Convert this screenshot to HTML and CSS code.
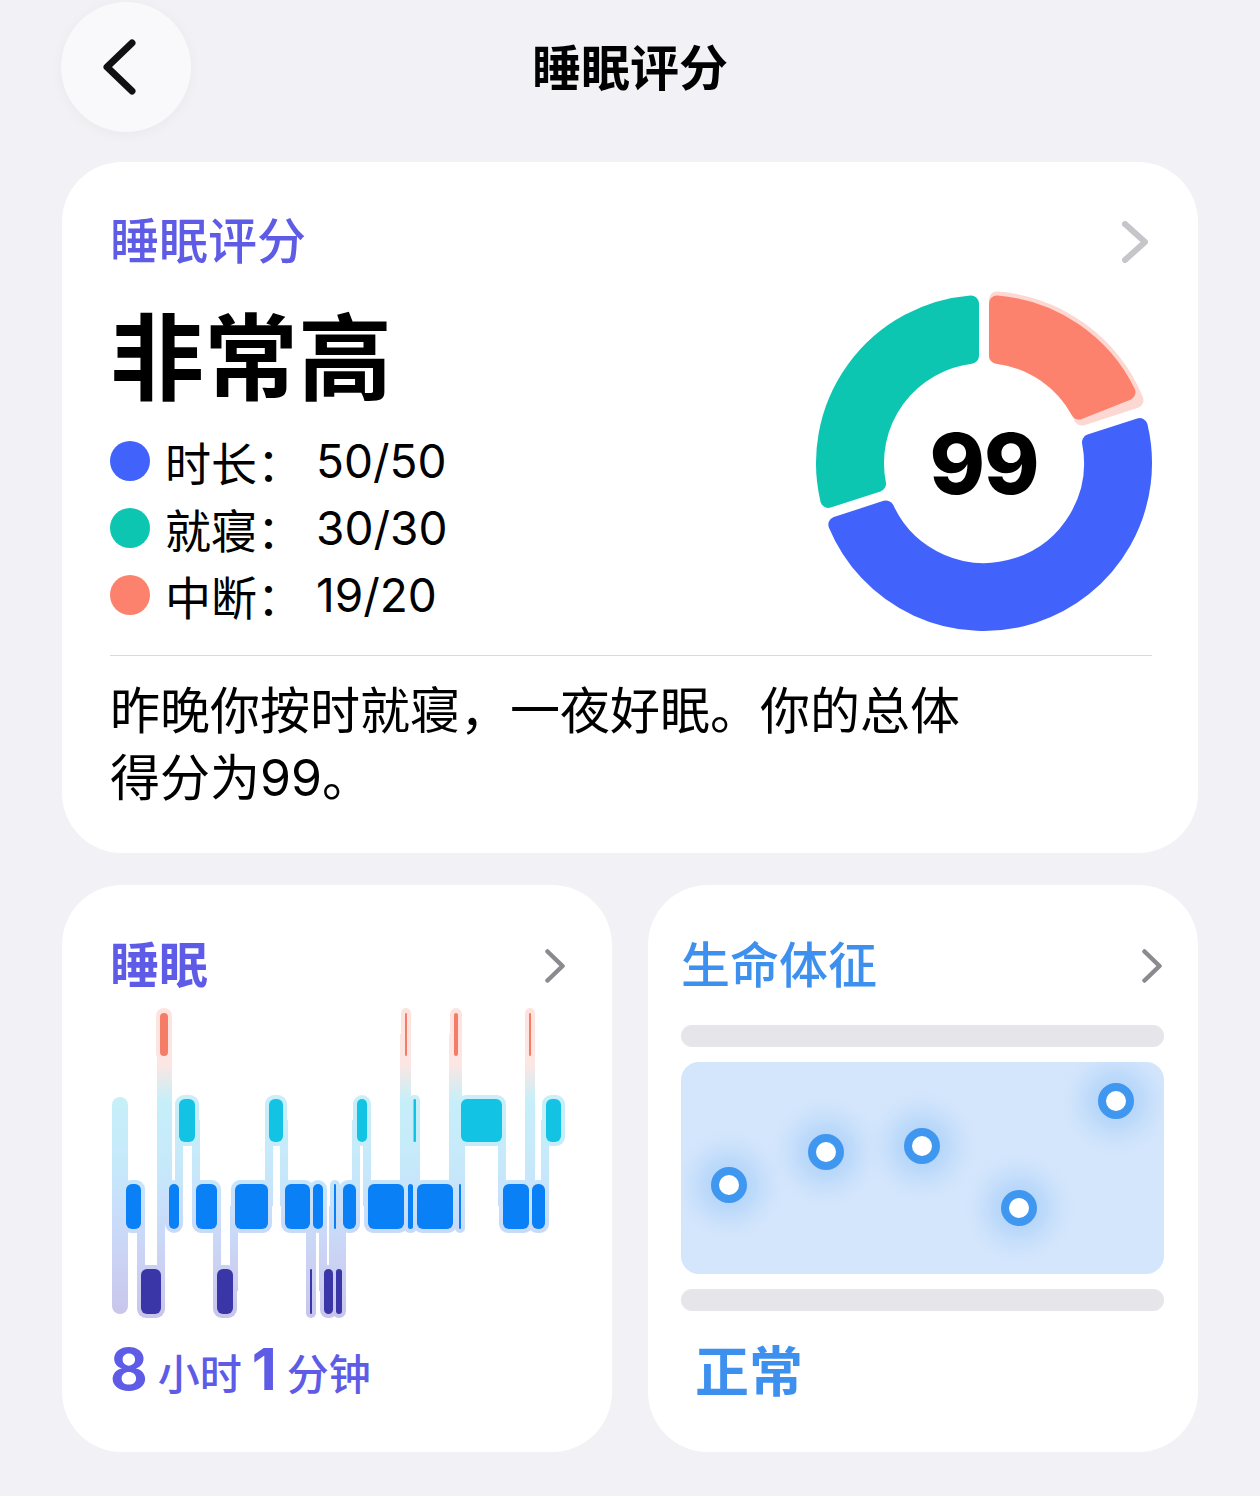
FILE: index.html
```html
<!DOCTYPE html>
<html lang="zh-CN">
<head>
  <meta charset="UTF-8">
  <meta name="viewport" content="width=device-width, initial-scale=1.0">
  <title>睡眠评分</title>
  <link rel="stylesheet" href="styles.css">
</head>
<body>
  <div class="page">
    <header class="topbar">
      <button class="back-btn" aria-label="返回">
        <svg width="40" height="60" viewBox="0 0 40 60"><path d="M30 6 L5 30 L30 54" fill="none" stroke="#111" stroke-width="7" stroke-linecap="round" stroke-linejoin="round"/></svg>
      </button>
      <h1 class="page-title">睡眠评分</h1>
      <div></div>
    </header>

    <section class="card score-card">
      <div class="card-head">
        <span class="card-title">睡眠评分</span>
        <svg class="chev-lg" width="26" height="42" viewBox="0 0 26 42"><path d="M3 3 L23 21 L3 39" fill="none" stroke="#c6c6ca" stroke-width="6" stroke-linecap="round" stroke-linejoin="round"/></svg>
      </div>

      <div class="score-row">
        <div class="score-left">
          <div class="level">非常高</div>
          <ul class="legend">
            <li class="legend-row"><span class="dot dot-blue"></span>时长：<span class="legend-val">50/50</span></li>
            <li class="legend-row"><span class="dot dot-teal"></span>就寝：<span class="legend-val">30/30</span></li>
            <li class="legend-row"><span class="dot dot-coral"></span>中断：<span class="legend-val">19/20</span></li>
          </ul>
        </div>

        <div class="donut">
          <svg width="360" height="360" viewBox="-10 -10 360 360">
            <g stroke-width="16" stroke-linejoin="round">
              <path d="M182.99 6.51 A164 164 0 0 1 321.47 107.14 L267.96 124.53 A108 108 0 0 0 182.97 62.78 Z" fill="#fdd7d1" stroke="#fdd7d1"/>
              <path d="M182.98 10.53 A160 160 0 0 1 313.5 99.23 L264.91 118.46 A108 108 0 0 0 182.97 62.78 Z" fill="#fd826d" stroke="#fd826d"/>
              <path d="M325.68 133.06 A160 160 0 0 1 22.34 231.62 L72.04 215.47 A108 108 0 0 0 275.98 149.21 Z" fill="#4263fb" stroke="#4263fb"/>
              <path d="M14.32 206.94 A160 160 0 0 1 157.02 10.53 L157.03 62.78 A108 108 0 0 0 64.02 190.79 Z" fill="#0dc6b2" stroke="#0dc6b2"/>
            </g>
          </svg>
          <span class="donut-score">99</span>
        </div>
      </div>

      <div class="divider"></div>
      <p class="summary">昨晚你按时就寝，一夜好眠。你的总体得分为99。</p>
    </section>

    <div class="cards-row">
      <section class="card mini-card">
        <div class="card-head">
          <span class="card-title card-title-bold">睡眠</span>
          <svg width="20" height="34" viewBox="0 0 20 34"><path d="M2.5 2.5 L17.5 17 L2.5 31.5" fill="none" stroke="#8a8a8f" stroke-width="4.5" stroke-linecap="round" stroke-linejoin="round"/></svg>
        </div>

        <svg class="sleep-chart" width="455" height="316" viewBox="110 1005 455 316">
          <defs>
            <linearGradient id="halo" gradientUnits="userSpaceOnUse" x1="0" y1="1009" x2="0" y2="1320">
              <stop offset="0" stop-color="#fde3de"/>
              <stop offset="0.18" stop-color="#fce6e3"/>
              <stop offset="0.3" stop-color="#c6eff9"/>
              <stop offset="0.5" stop-color="#c6e9fa"/>
              <stop offset="0.66" stop-color="#c8defb"/>
              <stop offset="0.8" stop-color="#cbd3f4"/>
              <stop offset="1" stop-color="#c8c5ea"/>
            </linearGradient>
          </defs>
          <g fill="url(#halo)">
            <rect x="112" y="1098" width="16" height="217" rx="8"/>
            <rect x="122" y="1181" width="23" height="53" rx="9"/>
            <rect x="137" y="1266" width="28" height="53" rx="9"/>
            <rect x="156" y="1009" width="16" height="53" rx="8"/>
            <rect x="165" y="1181" width="18" height="53" rx="9"/>
            <rect x="175" y="1096" width="24" height="51" rx="9"/>
            <rect x="192" y="1181" width="29" height="53" rx="9"/>
            <rect x="213" y="1266" width="24" height="53" rx="9"/>
            <rect x="231" y="1181" width="41" height="53" rx="9"/>
            <rect x="265" y="1096" width="22" height="51" rx="9"/>
            <rect x="281" y="1181" width="33" height="53" rx="9"/>
            <rect x="306" y="1266" width="10" height="53" rx="5"/>
            <rect x="309" y="1181" width="18" height="53" rx="9"/>
            <rect x="320" y="1266" width="17" height="53" rx="8"/>
            <rect x="330" y="1181" width="10" height="53" rx="5"/>
            <rect x="332" y="1266" width="14" height="53" rx="7"/>
            <rect x="339" y="1181" width="21" height="53" rx="9"/>
            <rect x="353" y="1096" width="18" height="51" rx="9"/>
            <rect x="364" y="1181" width="44" height="53" rx="9"/>
            <rect x="401" y="1009" width="10" height="53" rx="5"/>
            <rect x="404" y="1181" width="13" height="53" rx="6"/>
            <rect x="409" y="1096" width="11" height="51" rx="5"/>
            <rect x="413" y="1181" width="44" height="53" rx="9"/>
            <rect x="450" y="1009" width="12" height="53" rx="6"/>
            <rect x="455" y="1181" width="10" height="53" rx="5"/>
            <rect x="457" y="1096" width="49" height="51" rx="9"/>
            <rect x="499" y="1181" width="34" height="53" rx="9"/>
            <rect x="525" y="1009" width="10" height="53" rx="5"/>
            <rect x="528" y="1181" width="21" height="53" rx="9"/>
            <rect x="542" y="1096" width="23" height="51" rx="9"/>
            <!-- connectors -->
            <rect x="137" y="1207" width="8" height="85"/>
            <rect x="157" y="1035" width="8" height="257"/>
            <rect x="164" y="1035" width="8" height="172"/>
            <rect x="175" y="1121" width="8" height="86"/>
            <rect x="192" y="1121" width="8" height="86"/>
            <rect x="213" y="1207" width="8" height="85"/>
            <rect x="230" y="1207" width="8" height="85"/>
            <rect x="265" y="1121" width="8" height="86"/>
            <rect x="280" y="1121" width="8" height="86"/>
            <rect x="306" y="1207" width="8" height="85"/>
            <rect x="308" y="1207" width="8" height="85"/>
            <rect x="319" y="1207" width="8" height="85"/>
            <rect x="329" y="1207" width="8" height="85"/>
            <rect x="332" y="1207" width="8" height="85"/>
            <rect x="338" y="1207" width="8" height="85"/>
            <rect x="352" y="1121" width="8" height="86"/>
            <rect x="363" y="1121" width="8" height="86"/>
            <rect x="400" y="1035" width="8" height="172"/>
            <rect x="403" y="1035" width="8" height="172"/>
            <rect x="409" y="1121" width="8" height="86"/>
            <rect x="412" y="1121" width="8" height="86"/>
            <rect x="449" y="1035" width="8" height="172"/>
            <rect x="454" y="1035" width="8" height="172"/>
            <rect x="457" y="1121" width="8" height="86"/>
            <rect x="498" y="1121" width="8" height="86"/>
            <rect x="525" y="1035" width="8" height="172"/>
            <rect x="527" y="1035" width="8" height="172"/>
            <rect x="541" y="1121" width="8" height="86"/>
          </g>
          <g fill="#f57d67">
            <rect x="160" y="1014" width="8" height="43" rx="4"/>
            <rect x="405" y="1014" width="2" height="43" rx="1"/>
            <rect x="454" y="1014" width="4" height="43" rx="2"/>
            <rect x="529" y="1014" width="2" height="43" rx="1"/>
          </g>
          <g fill="#13c3e3">
            <rect x="179" y="1100" width="16" height="43" rx="6"/>
            <rect x="269" y="1100" width="14" height="43" rx="6"/>
            <rect x="357" y="1100" width="10" height="43" rx="5"/>
            <rect x="413.5" y="1100" width="2.5" height="43" rx="1"/>
            <rect x="461" y="1100" width="41" height="43" rx="6"/>
            <rect x="546" y="1100" width="15" height="43" rx="6"/>
          </g>
          <g fill="#0a80f6">
            <rect x="126" y="1185" width="15" height="45" rx="6"/>
            <rect x="169" y="1185" width="10" height="45" rx="5"/>
            <rect x="196" y="1185" width="21" height="45" rx="6"/>
            <rect x="235" y="1185" width="33" height="45" rx="6"/>
            <rect x="285" y="1185" width="25" height="45" rx="6"/>
            <rect x="313" y="1185" width="10" height="45" rx="5"/>
            <rect x="334" y="1185" width="2" height="45" rx="1"/>
            <rect x="343" y="1185" width="13" height="45" rx="6"/>
            <rect x="368" y="1185" width="36" height="45" rx="6"/>
            <rect x="408" y="1185" width="5" height="45" rx="2.5"/>
            <rect x="417" y="1185" width="36" height="45" rx="6"/>
            <rect x="459" y="1185" width="2" height="45" rx="1"/>
            <rect x="503" y="1185" width="26" height="45" rx="6"/>
            <rect x="532" y="1185" width="13" height="45" rx="6"/>
          </g>
          <g fill="#3b36a7">
            <rect x="141" y="1270" width="20" height="45" rx="6"/>
            <rect x="217" y="1270" width="16" height="45" rx="6"/>
            <rect x="310" y="1270" width="2" height="45" rx="1"/>
            <rect x="324" y="1270" width="9" height="45" rx="4.5"/>
            <rect x="336" y="1270" width="6" height="45" rx="3"/>
          </g>
        </svg>

        <div class="duration">
          <span class="dur-num">8</span><span class="dur-unit">小时</span><span class="dur-num">1</span><span class="dur-unit">分钟</span>
        </div>
      </section>

      <section class="card mini-card vitals-card">
        <div class="card-head">
          <span class="card-title card-title-blue">生命体征</span>
          <svg class="chev-sm" width="20" height="34" viewBox="0 0 20 34"><path d="M2.5 2.5 L17.5 17 L2.5 31.5" fill="none" stroke="#8a8a8f" stroke-width="4.5" stroke-linecap="round" stroke-linejoin="round"/></svg>
        </div>

        <div class="v-bar v-bar-top"></div>
        <div class="v-panel">
          <svg width="483" height="212" viewBox="0 0 483 212">
            <defs>
              <radialGradient id="glow">
                <stop offset="0" stop-color="#9fc9f7" stop-opacity="0.95"/>
                <stop offset="0.45" stop-color="#b2d4f9" stop-opacity="0.6"/>
                <stop offset="1" stop-color="#d4e6fc" stop-opacity="0"/>
              </radialGradient>
            </defs>
            <g fill="url(#glow)">
              <circle cx="48" cy="123" r="62"/>
              <circle cx="145" cy="90" r="62"/>
              <circle cx="241" cy="84" r="62"/>
              <circle cx="435" cy="39" r="62"/>
              <circle cx="338" cy="146" r="62"/>
            </g>
            <g fill="#fff" stroke="#3f97ef" stroke-width="8">
              <circle cx="48" cy="123" r="14"/>
              <circle cx="145" cy="90" r="14"/>
              <circle cx="241" cy="84" r="14"/>
              <circle cx="435" cy="39" r="14"/>
              <circle cx="338" cy="146" r="14"/>
            </g>
          </svg>
        </div>
        <div class="v-bar v-bar-bottom"></div>

        <div class="v-status">正常</div>
      </section>
    </div>
  </div>
</body>
</html>
```

FILE: styles.css
```css
body {
  margin: 0;
  background-color: #f1f1f6;
  font-family: "Inter", "Noto Sans CJK SC", sans-serif;
  color: #000;
}

.page {
  padding: 0 62px;
}

/* top bar */
.topbar {
  display: grid;
  grid-template-columns: 130px 1fr 130px;
  align-items: center;
  height: 132px;
}

.back-btn {
  width: 130px;
  height: 130px;
  margin-left: -1px;
  margin-top: 2px;
  border: none;
  border-radius: 50%;
  background-color: #f9f9fc;
  box-shadow: 0 2px 14px rgba(0, 0, 0, 0.04);
  display: flex;
  align-items: center;
  justify-content: center;
  padding: 0 8px 0 0;
  cursor: pointer;
}

.page-title {
  margin: 0;
  padding-top: 6px;
  text-align: center;
  font-size: 49px;
  font-weight: 600;
  line-height: 60px;
}

/* cards */
.card {
  background-color: #fff;
  border-radius: 60px;
  box-sizing: border-box;
}

.score-card {
  margin-top: 30px;
  padding: 50px 50px 41px 48px;
}

.card-head {
  display: flex;
  justify-content: space-between;
  align-items: center;
  height: 60px;
}

.card-title {
  font-size: 49px;
  font-weight: 500;
  line-height: 60px;
  color: #5e5ce6;
}

.card-title-bold {
  font-weight: 700;
}

.card-title-blue {
  color: #3e90ee;
}

.score-row {
  display: flex;
  justify-content: space-between;
  margin-top: 11px;
}

.score-left {
  padding-top: 26px;
}

.level {
  font-size: 94px;
  font-weight: 700;
  line-height: 101px;
}

.legend {
  list-style: none;
  margin: 17px 0 0;
  padding: 0;
}

.legend-row {
  display: flex;
  align-items: center;
  height: 67px;
  font-size: 46px;
}

.legend-val {
  margin-left: 13px;
}

.dot {
  width: 40px;
  height: 40px;
  border-radius: 50%;
  margin-right: 15px;
}

.dot-blue {
  background-color: #4263fb;
}

.dot-teal {
  background-color: #0dc6b2;
}

.dot-coral {
  background-color: #fd826d;
}

.donut {
  position: relative;
  width: 360px;
  height: 360px;
  margin-right: -16px;
}

.donut svg {
  display: block;
}

.donut-score {
  position: absolute;
  inset: 0;
  display: flex;
  align-items: center;
  justify-content: center;
  font-size: 84px;
  font-weight: 800;
  letter-spacing: -1px;
}

.divider {
  height: 1px;
  margin: 12px -4px 0 0;
  background-color: #d9d9de;
}

.summary {
  margin: 22px 0 0;
  max-width: 880px;
  font-size: 50px;
  line-height: 67px;
}

/* bottom cards */
.cards-row {
  display: grid;
  grid-template-columns: 1fr 1fr;
  gap: 36px;
  margin-top: 32px;
}

.mini-card {
  height: 567px;
  padding: 51px 47px 0 48px;
}

.sleep-chart {
  display: block;
  margin-top: 8px;
}

.duration {
  margin-top: 14px;
  line-height: 70px;
  color: #5e5ce6;
}

.dur-num {
  font-size: 58px;
  font-weight: 700;
}

.dur-unit {
  margin: 0 10px;
  font-size: 42px;
  font-weight: 500;
}

.vitals-card {
  padding: 51px 34px 0 33px;
}

.chev-sm {
  margin-right: 2px;
}

.v-bar {
  height: 22px;
  border-radius: 11px;
  background-color: #e5e5ea;
}

.v-bar-top {
  margin-top: 29px;
}

.v-bar-bottom {
  margin-top: 15px;
}

.v-panel {
  height: 212px;
  margin-top: 15px;
  border-radius: 18px;
  background-color: #d4e6fc;
  overflow: hidden;
}

.v-panel svg {
  display: block;
}

.v-status {
  margin: 30px 0 0 14px;
  font-size: 54px;
  font-weight: 700;
  line-height: 64px;
  color: #3e90ee;
}
```
